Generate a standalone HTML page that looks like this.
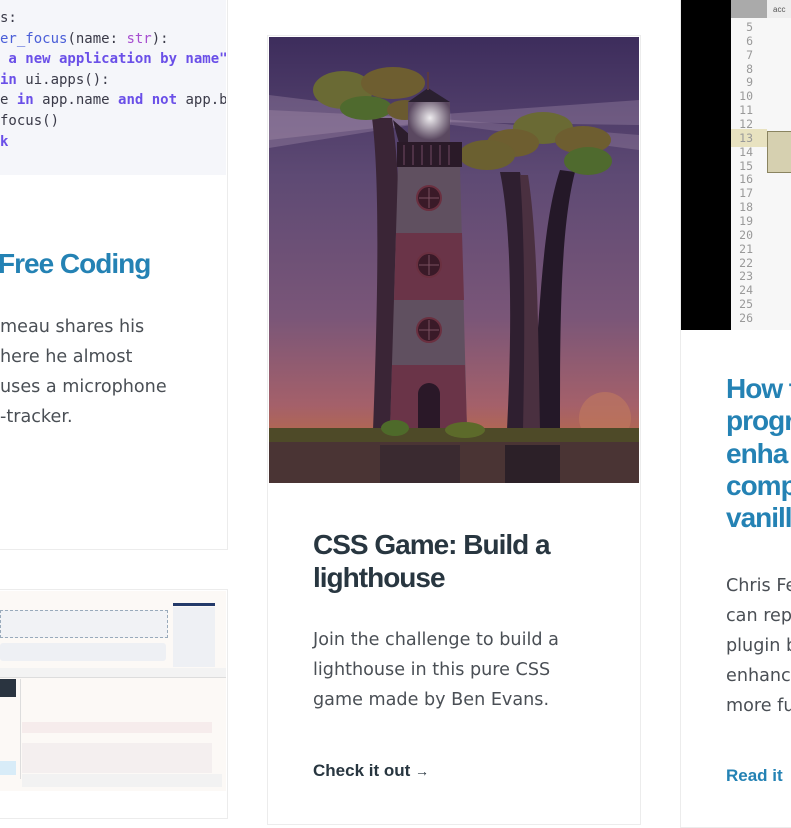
<!DOCTYPE html>
<html><head><meta charset="utf-8"><style>
*{margin:0;padding:0;box-sizing:border-box}
body{width:791px;height:805px;overflow:hidden;background:#fff;position:relative;font-family:"Liberation Sans",sans-serif}
.card{position:absolute;border:1px solid #ececec;background:#fff}
.abs{position:absolute}
.code{font-family:"DejaVu Sans Mono","Liberation Mono",monospace;font-size:14px;line-height:20.6px;color:#3a3a48;white-space:pre}
.k{color:#6a4fe8;font-weight:bold}.f{color:#4a5ed8}.s{color:#a74fd0}
h2{font-weight:bold;font-size:28px;letter-spacing:-1px;line-height:33px}
.p{font-family:"DejaVu Sans","Liberation Sans",sans-serif;font-size:17.6px;line-height:30px;color:#4a4f55;letter-spacing:0}
.ln{font-family:"DejaVu Sans Mono",monospace;font-size:11.5px;color:#999;text-align:right;line-height:13.86px}
</style></head><body>

<div class="card" style="left:-2px;top:-2px;width:230px;height:552px"></div>
<div class="abs" style="left:0;top:0;width:226px;height:175px;background:#f5f6fa;overflow:hidden">
<div class="code" style="position:absolute;left:0;top:8px">s:
<span class="f">er_focus</span>(name: <span class="s">str</span>):
<span class="k"> a new application by name"""</span>
<span class="k">in</span> ui.apps():
e <span class="k">in</span> app.name <span class="k">and not</span> app.back
focus()
<span class="k">k</span></div>
</div>
<h2 class="abs" style="left:-2px;top:247px;color:#2482b4">Free Coding</h2>
<div class="abs p" style="left:0;top:312px;width:226px;white-space:nowrap">meau shares his<br>here he almost<br>uses a microphone<br>-tracker.</div>

<div class="card" style="left:-2px;top:589px;width:230px;height:230px"></div>
<div class="abs" style="left:0;top:591px;width:226px;height:200px;background:#fcf9f6;overflow:hidden">
<div class="abs" style="left:0;top:19px;width:168px;height:28px;border:1px dashed #9ab;background:#f1f2f5"></div>
<div class="abs" style="left:0;top:52px;width:166px;height:18px;background:#eef0f4;border-radius:3px"></div>
<div class="abs" style="left:173px;top:12px;width:42px;height:3px;background:#243a6a"></div>
<div class="abs" style="left:173px;top:16px;width:42px;height:60px;background:#eef0f4"></div>
<div class="abs" style="left:0;top:77px;width:226px;height:10px;background:#f3f3f3;border-bottom:1px solid #ddd"></div>
<div class="abs" style="left:0;top:88px;width:16px;height:18px;background:#2a3440"></div>
<div class="abs" style="left:0;top:170px;width:16px;height:14px;background:#d8ecf8"></div>
<div class="abs" style="left:20px;top:88px;width:1px;height:100px;background:#ddd"></div>
<div class="abs" style="left:22px;top:131px;width:190px;height:11px;background:#f6ecec"></div>
<div class="abs" style="left:22px;top:152px;width:190px;height:30px;background:#f4efef"></div>
<div class="abs" style="left:22px;top:183px;width:200px;height:13px;background:#f2f2f2"></div>
</div>

<div class="card" style="left:267px;top:35px;width:374px;height:790px"></div>
<svg class="abs" style="left:269px;top:37px" width="370" height="446" viewBox="269 37 370 446">
<defs>
<linearGradient id="sky" x1="0" y1="0" x2="0" y2="1">
<stop offset="0" stop-color="#3d2d5c"/><stop offset="0.35" stop-color="#5e4a74"/><stop offset="0.7" stop-color="#7a5678"/><stop offset="0.92" stop-color="#a4606a"/><stop offset="1" stop-color="#b4684e"/></linearGradient>
<radialGradient id="glow"><stop offset="0" stop-color="#fff" stop-opacity=".9"/><stop offset="1" stop-color="#fff" stop-opacity="0"/></radialGradient>
</defs>
<rect x="269" y="37" width="370" height="400" fill="url(#sky)"/>
<polygon points="269,95 430,115 639,100 639,125 430,122 269,148" fill="#c8b0c8" opacity=".25"/>
<polygon points="269,110 430,118 639,135 639,150 430,122 269,140" fill="#d8c0d0" opacity=".2"/>
<circle cx="605" cy="418" r="26" fill="#c27a5e" opacity=".6"/>
<path d="M373,430 C378,300 380,180 372,118 L392,118 C402,180 402,300 400,430 Z" fill="#3a2536"/>
<path d="M393,120 C400,150 405,160 410,175 L410,135 Z" fill="#2c1d2c"/>
<ellipse cx="343" cy="90" rx="30" ry="19" fill="#6a6a34"/>
<ellipse cx="393" cy="83" rx="32" ry="16" fill="#6e5e30"/>
<ellipse cx="366" cy="108" rx="26" ry="12" fill="#4f6a2e"/>
<ellipse cx="405" cy="110" rx="18" ry="10" fill="#6a5a30"/>
<path d="M507,430 C512,330 512,230 500,172 L520,172 C532,230 535,330 535,430 Z" fill="#2f1f30"/>
<path d="M530,430 C540,330 540,230 560,170 L575,172 C560,230 560,330 560,430 Z" fill="#241828"/>
<path d="M523,430 C525,330 525,240 520,175 L528,175 C538,240 538,330 540,430 Z" fill="#4a3040"/>
<ellipse cx="543" cy="128" rx="30" ry="16" fill="#6a6a34"/>
<ellipse cx="513" cy="143" rx="26" ry="14" fill="#6e5e30"/>
<ellipse cx="487" cy="155" rx="28" ry="15" fill="#6b6030"/>
<ellipse cx="583" cy="140" rx="28" ry="14" fill="#6e5e30"/>
<ellipse cx="588" cy="161" rx="24" ry="14" fill="#4f6a2e"/>
<polygon points="398,167 460,167 467,430 390,430" fill="#605060"/>
<polygon points="396,233 462,233 464,300 394,300" fill="#6a3448"/>
<polygon points="392,365 465,365 467,430 390,430" fill="#6a3448"/>
<rect x="397" y="142" width="65" height="25" fill="#2a1a28"/>
<g stroke="#5a3a50" stroke-width="1.5"><line x1="404" y1="145" x2="404" y2="165"/><line x1="413" y1="145" x2="413" y2="165"/><line x1="422" y1="145" x2="422" y2="165"/><line x1="431" y1="145" x2="431" y2="165"/><line x1="440" y1="145" x2="440" y2="165"/><line x1="449" y1="145" x2="449" y2="165"/></g>
<rect x="408" y="102" width="42" height="40" fill="#5a4860"/>
<circle cx="430" cy="118" r="22" fill="url(#glow)"/>
<polygon points="408,102 428,88 450,102" fill="#2a2030"/>
<rect x="427" y="72" width="2" height="18" fill="#5a3a40"/>
<g fill="#3a1a28" stroke="#6a3040" stroke-width="2">
<circle cx="429" cy="198" r="12"/><circle cx="429" cy="265" r="12"/><circle cx="429" cy="330" r="12"/></g>
<g stroke="#7a5060" stroke-width="1"><line x1="429" y1="188" x2="429" y2="208"/><line x1="419" y1="198" x2="439" y2="198"/><line x1="429" y1="255" x2="429" y2="275"/><line x1="419" y1="265" x2="439" y2="265"/><line x1="429" y1="320" x2="429" y2="340"/><line x1="419" y1="330" x2="439" y2="330"/></g>
<path d="M418,430 L418,394 A11,11 0 0 1 440,394 L440,430 Z" fill="#2a1828"/>
<rect x="269" y="428" width="370" height="14" fill="#4e4a28"/>
<ellipse cx="395" cy="428" rx="14" ry="8" fill="#4e6a2a"/>
<ellipse cx="465" cy="430" rx="20" ry="8" fill="#5c6a2a"/>
<rect x="269" y="442" width="370" height="41" fill="#4a3434"/>
<rect x="380" y="445" width="80" height="38" fill="#3a2a30"/>
<rect x="505" y="445" width="55" height="38" fill="#2c2028"/>
</svg>
<h2 class="abs" style="left:313px;top:528px;color:#283640">CSS Game: Build a<br>lighthouse</h2>
<div class="abs p" style="left:313px;top:625px;white-space:nowrap">Join the challenge to build a<br>lighthouse in this pure CSS<br>game made by Ben Evans.</div>
<div class="abs" style="left:313px;top:761px;font-weight:bold;font-size:17px;color:#283640">Check it out <span style="font-weight:normal;font-size:14px">→</span></div>

<div class="card" style="left:680px;top:-2px;width:130px;height:830px"></div>
<div class="abs" style="left:681px;top:0;width:110px;height:330px;background:#000"></div>
<div class="abs" style="left:731px;top:0;width:60px;height:330px;background:#f7f7f7"></div>
<div class="abs" style="left:731px;top:0;width:36px;height:18px;background:#aaa"></div>
<div class="abs" style="left:767px;top:0;width:24px;height:18px;background:#eee;font-size:8px;color:#555;padding:5px 0 0 6px">acc</div>
<div class="abs" style="left:731px;top:129px;width:36px;height:18px;background:#e8e2c0"></div>
<div class="abs" style="left:767px;top:131px;width:24px;height:42px;background:#d6d0b0;border:1px solid #8a8460;border-right:none"></div>
<div class="abs ln" style="left:731px;top:21px;width:22px">5<br>6<br>7<br>8<br>9<br>10<br>11<br>12<br>13<br>14<br>15<br>16<br>17<br>18<br>19<br>20<br>21<br>22<br>23<br>24<br>25<br>26</div>
<h2 class="abs" style="left:726px;top:373px;color:#2482b4;line-height:32.3px;white-space:nowrap">How t<br>progr<br>enha<br>comp<br>vanill</h2>
<div class="abs p" style="left:726px;top:571px;white-space:nowrap">Chris Fe<br>can rep<br>plugin b<br>enhanci<br>more fu</div>
<div class="abs" style="left:726px;top:766px;font-weight:bold;font-size:17px;color:#2482b4">Read it</div>
</body></html>
